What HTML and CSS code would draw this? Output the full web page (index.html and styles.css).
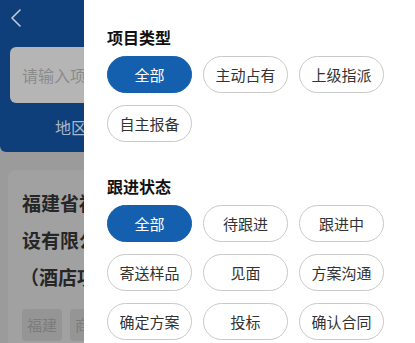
FILE: index.html
```html
<!DOCTYPE html>
<html lang="zh">
<head>
<meta charset="utf-8">
<link rel="stylesheet" href="styles.css">
</head>
<body>
<div class="screen">
  <div class="page">
    <div class="page-inner">
      <div class="header">
        <svg class="back" width="14" height="20" viewBox="0 0 14 20"><path d="M11 2 L3 10 L11 18" fill="none" stroke="#c3ccd8" stroke-width="1.6" stroke-linecap="round" stroke-linejoin="round"/></svg>
        <div class="search">请输入项目</div>
        <div class="filters"><span>地区</span></div>
      </div>
      <div class="card">
        <div class="card-title">
          <div>福建省福</div>
          <div>设有限公</div>
          <div>（酒店项</div>
        </div>
        <div class="tags"><span class="tag">福建</span><span class="tag">商业</span></div>
      </div>
    </div>
  </div>
  <div class="drawer">
    <div class="section">
      <div class="section-title">项目类型</div>
      <div class="chips">
        <div class="chip active">全部</div>
        <div class="chip">主动占有</div>
        <div class="chip">上级指派</div>
        <div class="chip">自主报备</div>
      </div>
    </div>
    <div class="section second">
      <div class="section-title">跟进状态</div>
      <div class="chips">
        <div class="chip active">全部</div>
        <div class="chip">待跟进</div>
        <div class="chip">跟进中</div>
        <div class="chip">寄送样品</div>
        <div class="chip">见面</div>
        <div class="chip">方案沟通</div>
        <div class="chip">确定方案</div>
        <div class="chip">投标</div>
        <div class="chip">确认合同</div>
      </div>
    </div>
  </div>
</div>
</body>
</html>
```
FILE: styles.css
```css
* { box-sizing: border-box; }
html, body { margin: 0; padding: 0; }
body {
  width: 415px;
  height: 343px;
  overflow: hidden;
  font-family: "Noto Sans CJK SC", "Noto Sans", sans-serif;
  background: #9b9b9b;
}
.screen {
  display: flex;
  width: 415px;
  height: 343px;
}
.page {
  width: 84px;
  flex: none;
  overflow: hidden;
  background: #9b9b9b;
}
.page-inner {
  width: 130px;
}
.header {
  height: 152px;
  background: #0e3f7a;
  border-radius: 0 0 6px 6px;
  padding: 8px 0 0 10px;
  display: flex;
  flex-direction: column;
}
.back { display: block; margin-left: -1px; }
.search {
  margin-top: 19px;
  height: 56px;
  border-radius: 6px 0 0 6px;
  background: #b5b5b5;
  color: #8b8b8b;
  font-size: 16px;
  line-height: 56px;
  padding-left: 12px;
  white-space: nowrap;
  overflow: hidden;
}
.filters {
  display: flex;
  padding-left: 45px;
  margin-top: 13px;
  color: #a9b6c8;
  font-size: 16px;
  line-height: 22px;
  white-space: nowrap;
}
.card {
  margin: 18px 0 0 8px;
  background: #a1a1a1;
  border-radius: 8px 0 0 0;
  padding: 14px 0 0 14px;
  height: 200px;
}
.card-title {
  font-size: 19px;
  font-weight: 700;
  line-height: 37px;
  color: #262626;
  white-space: nowrap;
}
.card-title div:last-child { margin-left: -2px; }
.tags {
  display: flex;
  gap: 8px;
  margin-top: 14px;
  white-space: nowrap;
}
.tag {
  background: #959595;
  color: #7c7c7c;
  font-size: 15px;
  line-height: 32px;
  padding: 0 5px;
  border-radius: 4px;
}
.drawer {
  flex: 1;
  background: #ffffff;
  padding: 28px 31px 0 23px;
}
.section-title {
  font-size: 16px;
  font-weight: 700;
  line-height: 18px;
  color: #111111;
  margin-bottom: 10px;
}
.second { margin-top: 35px; }
.chips {
  display: grid;
  grid-template-columns: repeat(3, 1fr);
  column-gap: 11px;
  row-gap: 12px;
}
.chip {
  height: 37px;
  border: 1px solid #c9c9c9;
  border-radius: 19px;
  color: #333333;
  font-size: 15px;
  display: flex;
  align-items: center;
  justify-content: center;
  background: #fff;
}
.chip.active {
  background: #1560ae;
  border-color: #1560ae;
  color: #ffffff;
}
```
